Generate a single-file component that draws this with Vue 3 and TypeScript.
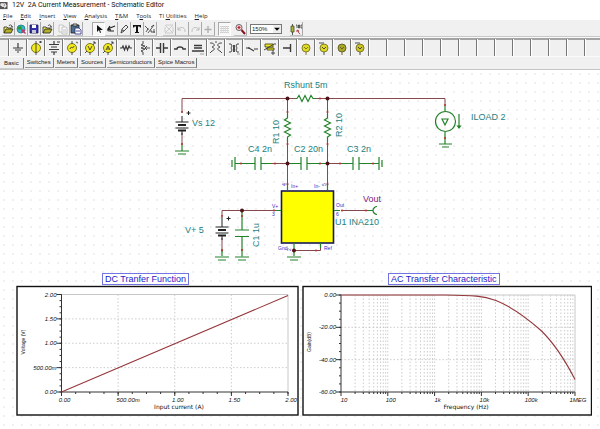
<script setup lang="ts">
import { ref } from 'vue'

interface Stroke {
  d: string
  s?: string
  f?: string
  w?: number
}
interface Tool {
  name: string
  art: Stroke[]
  disabled?: boolean
}

const menus: [string, string, string][] = [
  ['', 'F', 'ile'],
  ['', 'E', 'dit'],
  ['', 'I', 'nsert'],
  ['', 'V', 'iew'],
  ['', 'A', 'nalysis'],
  ['', 'T', '&M'],
  ['T', 'o', 'ols'],
  ['TI ', 'U', 'tilities'],
  ['', 'H', 'elp'],
]

const folder: Stroke[] = [
  { d: 'M2 10V4h3l1 1h3v2', s: '#222', f: '#f4ee60' },
  { d: 'M2 10l2-4h7l-2 4z', s: '#222', f: '#b8b028' },
  { d: 'M7 3c1-2 3-1 3 1M9 4h2', s: '#222' },
]

const fileTools: Tool[] = [
  { name: 'Open', art: folder },
  {
    name: 'Open from web',
    art: [
      { d: 'M6 2a4 4 0 1 0 0 8a4 4 0 1 0 0-8z', s: '#137a86', f: '#35b9c8' },
      { d: 'M3 4l3-1 1 2-2 2-2-1z', f: '#2b9a38' },
      { d: 'M6 6l5 1-2 1 2 2-1 1-2-2-1 1z', f: '#c23a6c' },
    ],
  },
  {
    name: 'Save',
    art: [
      { d: 'M2 2h8v8H2z', s: '#15155e', f: '#3434a8' },
      { d: 'M4 2h4v3H4z', f: '#fff' },
      { d: 'M4 7h4v3H4z', f: '#c8c8d4' },
    ],
  },
  { name: 'Close', art: folder },
]

const clipTools: Tool[] = [
  {
    name: 'Copy',
    disabled: true,
    art: [
      { d: 'M2 2h4l1 1v6H2z', s: '#bbb', f: '#f7f7f7' },
      { d: 'M5 4h4l1 1v6H5zM6 7h3M6 9h3', s: '#bbb', f: '#f7f7f7' },
    ],
  },
  {
    name: 'Paste',
    art: [
      { d: 'M1 2h8v8H1z', s: '#222', f: '#4a6f86' },
      { d: 'M3 1h4v2H3z', s: '#222', f: '#ddd' },
      { d: 'M5 5h4l2 2v4H5zM6 8h4', s: '#23238e', f: '#fff' },
    ],
  },
]

const editTools: Tool[] = [
  { name: 'Select', art: [{ d: 'M4 2v7l2-2 1 3 1-.5L7 7h3z', f: '#111' }] },
  { name: 'Last component', art: [{ d: 'M10 3L5 5c-3 1-3 3 0 3h4M5 3L3 6l3 1', s: '#222', w: 1.2 }] },
  { name: 'Wire', art: [{ d: 'M3 10l1-4 4-4 2 2-4 4zM4 7l2 1', s: '#222', f: '#eee' }] },
  { name: 'Text', art: [{ d: 'M2 2h8v2.5H9L8.500 3.500H7V9h1v1H4V9h1V3.500H3.500L3 4.500H2z', f: '#111' }] },
  { name: 'Hide values', art: [{ d: 'M1 3l3 3-2 3M3 6h2M10 2L4 10M7 4l3-2M7 7v2h4M10 6v4', s: '#333' }] },
]

const historyTools: Tool[] = [
  { name: 'Delete', disabled: true, art: [{ d: 'M2 2l8 8M10 2l-8 8M3 2h7M2 10h8M2 4v5M10 4v5', s: '#c4c4c4' }] },
  { name: 'Undo', disabled: true, art: [{ d: 'M2 4v3h3M2 7c2-4 7-3 7 1v1', s: '#b4b4b4' }] },
  { name: 'Redo', disabled: true, art: [{ d: 'M10 4v3H7M10 7c-2-4-7-3-7 1v1', s: '#b4b4b4' }] },
  { name: 'Move', disabled: true, art: [{ d: 'M6 3v7M2.500 6.500h7', s: '#b0b0b0', w: 1.4 }] },
]

const gridTool: Tool[] = [
  { name: 'Grid', art: [{ d: 'M1 3.500h9M1 5.500h9M1 7.500h9M1 9.500h9', s: '#c4c4c4' }, { d: 'M2.500 3v7M4.500 3v7M6.500 3v7M8.500 3v7', s: '#d8d8d8' }] },
]
const zoomTool: Tool[] = [
  {
    name: 'Zoom',
    art: [
      { d: 'M5 1.500a3 3 0 1 0 0 6a3 3 0 1 0 0-6z', s: '#444', f: '#f6d8d8' },
      { d: 'M3.500 4.500h3M5 3v3', s: '#c01830', w: 1.2 },
      { d: 'M7.500 7l3.500 4', s: '#8c1022', w: 2 },
    ],
  },
]
const findTool: Tool[] = [
  {
    name: 'Find component',
    art: [
      { d: 'M2.500 1v11', s: '#333' },
      { d: 'M1 3h3v6H1z', s: '#4c5222', f: '#a8b23a' },
      { d: 'M6 2h1v3M8.500 2v3h1V2zM12 2h-1v3h1', s: '#333', w: 0.8 },
      { d: 'M7 7l2 1-1 .7 2 2.500M7 7v2', s: '#b01828' },
    ],
  },
]

const disc = (r: number): string => `M8 ${8 - r}a${r} ${r} 0 1 0 0 ${2 * r}a${r} ${r} 0 1 0 0-${2 * r}z`
const yellow = '#f1e91c'
const ink = '#3a3a3a'

const parts: Tool[] = [
  { name: 'Ground', art: [{ d: 'M8 3v5M3 8h10M5 10h6M7 12h2', s: ink, w: 1.2 }] },
  { name: 'Voltage source', art: [{ d: disc(4.5), s: '#6f6a10', f: yellow }, { d: 'M8 1v14M11 2h3M12.500 1v2', s: ink }] },
  { name: 'Battery', art: [{ d: 'M8 1v3M8 12v3M3 4.500h10M5 7h6M3 9.500h10M5 12h6M11 2h3', s: ink, w: 1.2 }] },
  { name: 'Generator', art: [{ d: disc(4.5), s: '#6f6a10', f: yellow }, { d: 'M8 1v3M8 12v3M6 9c1-4 3 1 4-3M12 2l2 1', s: ink }] },
  { name: 'Voltmeter', art: [{ d: disc(4.5), s: '#6f6a10', f: yellow }, { d: 'M6 6l2 4 2-4M3 13l2-2M11 5l2-3M11 2h2v2M8 12v3', s: ink }] },
  { name: 'Ammeter', art: [{ d: disc(4.5), s: '#6f6a10', f: yellow }, { d: 'M6 10l2-4 2 4M7 9h2M3 13l2-2M11 5l2-3M11 2h2v2M8 12v3', s: ink }] },
  { name: 'Resistor', art: [{ d: 'M2 8h2l1-2 1.500 4L8 6l1.500 4L11 6l1 2h2', s: ink, w: 1.2 }] },
  { name: 'Potentiometer', art: [{ d: 'M7 1v3l-2 1 4 1-4 2 4 1-4 2 2 1v3M14 8H9M11 6L9 8l2 2', s: ink }] },
  { name: 'Capacitor', art: [{ d: 'M2 8h4M10 8h4M6.500 3v10M9.500 3v10', s: ink, w: 1.4 }] },
  { name: 'Inductor', art: [{ d: 'M2 9h3c0-2 2-2 3-2s3 0 3 2h3', s: ink, w: 1.4 }] },
  { name: 'Core inductor', art: [{ d: 'M4 5.500h8M4 8h8M2 11h12', s: ink, w: 1.4 }, { d: 'M10 14h4', s: '#999' }] },
  { name: 'Coupled inductors', art: [{ d: 'M2 3h2c3 1 3 3 0 4c3 1 3 3 0 4l-2 2M14 3h-2c-3 1-3 3 0 4c-3 1-3 3 0 4l2 2M7 2h2', s: ink }] },
  { name: 'Transformer', art: [{ d: 'M3 4h2l1 2-1 2 1 2-1 2H3M13 4h-2l-1 2 1 2-1 2 1 2h2M7.500 5v7M8.500 5v7', s: ink }, { d: 'M11 14h3', s: '#999' }] },
  { name: 'Switch', art: [{ d: 'M2 8h3l5 3M10 9h4M5 7v2', s: ink, w: 1.2 }] },
  { name: 'Relay', art: [{ d: 'M3 4h8v3H3zM5 8h7v2H5z', s: '#4b4b16', f: yellow }, { d: 'M2 10l10-6h2M11 10v5M9 13h4', s: ink }] },
  { name: 'Jumper', art: [{ d: 'M3 8h7M10.500 4v8', s: ink, w: 1.4 }] },
  { name: 'Lamp', art: [{ d: disc(4), s: '#77731c', f: '#ded82a' }, { d: 'M6 7l2 2 2-2M8 12v3', s: '#77731c' }] },
  { name: 'Voltage pin', art: [{ d: disc(4), s: '#77731c', f: '#ded82a' }, { d: 'M6 7l2 2 2-2M8 12v3M3 3h3M7 2v2', s: ink }] },
  { name: 'Current pin', art: [{ d: disc(4), s: '#5d5c24', f: '#aaa62a' }, { d: 'M6 7l2 2 2-2M8 12v3', s: '#5d5c24' }] },
  { name: 'Power pin', art: [{ d: disc(4), s: '#77731c', f: '#cac42a' }, { d: 'M6 7l2 2 2-2M8 12v3M3 3h3M7 2v2', s: ink }] },
]
const emptySlots = 60

const toolGroups: { id: string; tools: Tool[] }[] = [
  { id: 'file', tools: fileTools },
  { id: 'clip', tools: clipTools },
  { id: 'edit', tools: editTools },
  { id: 'history', tools: historyTools },
  { id: 'grid', tools: gridTool },
  { id: 'zoom', tools: zoomTool },
]

const activeTool = ref('Select')
const gridShown = ref(true)
const zoom = ref('150%')

function pick(name: string): void {
  if (name === 'Grid') gridShown.value = !gridShown.value
  else activeTool.value = name
}
function isPressed(name: string): boolean {
  return name === 'Grid' ? gridShown.value : activeTool.value === name
}

const tabs = ['Basic', 'Switches', 'Meters', 'Sources', 'Semiconductors', 'Spice Macros']
const activeTab = ref('Basic')

const wires = [
  'M182 112V98.500H295M315 98.500H445V106',
  'M287.500 98.500V114M287.500 142V184M327.500 98.500V114M327.500 142V184',
  'M182 133v12M270 163.500h24M314 163.500h34',
  'M222 216V210.500H276M341 210.500H368M222 238v14',
  'M294 250.500H320.500V245',
]
const leads = [
  'M182 145v6M175 151h14M178 154h8',
  'M295 98.500h2l2-3 3 6 3-6 3 6 3-6 2 3h2',
  'M287.500 114v4l-3 2 6 3-6 3 6 3-6 3 6 3-3 2v5',
  'M327.500 114v4l-3 2 6 3-6 3 6 3-6 3 6 3-3 2v5',
  'M232 160v7M235 157v13M235 163.500h20M255 157v13M261 157v13M261 163.500h10',
  'M287.500 163.500h13M301 157v13M307 157v13M307 163.500h20',
  'M340 163.500h13M353 157v13M359 157v13M359 163.500h20M379 157v13M382 160v7',
  'M445 106v5M445 132v12M439 144h13M442 147h7M459 114v14M457.500 126l1.500 2 1.500-2z',
  'M442 119h6l-3 6z',
  'M287.500 184v6M327.500 184v6M276 210.500h5M334 210.500h6M294 243v13M320.500 243v5',
  'M242 210.500v19M235 230h14M235 236.500h14M242 236.500v20',
  'M222 250v6M215 257h14M218 260h8M235 257h14M238 260h8M287 257h14M290 260h8',
  'M368 210.500h5M377 206.500c-2 0-4 2-4 4s2 4 4 4',
]
const nodes: [number, number][] = [
  [287.5, 98.5], [327.5, 98.5], [287.5, 163.5], [327.5, 163.5], [242, 210.5], [294, 250.5],
]
const pins: [number, number][] = [
  [182, 112], [182, 144], [320, 98.5], [287.5, 112], [287.5, 144], [327.5, 112], [327.5, 144],
  [241, 163.5], [275, 163.5], [320, 163.5], [340, 163.5], [373, 163.5], [445, 105], [445, 138],
  [287.5, 184], [327.5, 184], [274, 210.5], [342, 210.5], [366, 210.5], [222, 216], [242, 216],
  [222, 250], [242, 250], [316, 250.5],
]
const labels: { t: string; x: number; y: number; up?: boolean }[] = [
  { t: 'Rshunt 5m', x: 284, y: 88 },
  { t: 'Vs 12', x: 192, y: 126 },
  { t: 'ILOAD 2', x: 471, y: 120 },
  { t: 'R1 10', x: 279, y: 144, up: true },
  { t: 'R2 10', x: 342, y: 137, up: true },
  { t: 'C4 2n', x: 248, y: 152 },
  { t: 'C2 20n', x: 294, y: 152 },
  { t: 'C3 2n', x: 347, y: 152 },
  { t: 'V+ 5', x: 185, y: 233 },
  { t: 'C1 1u', x: 259, y: 247, up: true },
  { t: 'U1 INA210', x: 335, y: 225 },
]
const pinLabels: { t: string; x: number; y: number }[] = [
  { t: 'In+', x: 291, y: 188 },
  { t: 'In-', x: 314, y: 188 },
  { t: 'V+', x: 272, y: 208 },
  { t: '3', x: 272, y: 216 },
  { t: 'Out', x: 336, y: 207 },
  { t: '6', x: 336, y: 216 },
  { t: 'Gnd', x: 278, y: 250 },
  { t: 'Ref', x: 324, y: 250 },
]

interface Tick {
  at: number
  label: string
}
interface Chart {
  id: string
  title: string
  box: string
  frame: { x: number; w: number }
  plot: { x: number; w: number; y: number; h: number }
  xs: Tick[]
  ys: Tick[]
  minorX: number[]
  gridX: number[]
  minorY: number[]
  curve: string
  xTitle: string
  xTitleAt: number
  yTitle: string
  yTitleAt: number
}

const spread = (from: number, to: number, n: number): number[] =>
  Array.from({ length: n + 1 }, (_, i) => from + ((to - from) * i) / n)

const dcX = ['0.00', '500.00m', '1.00', '1.50', '2.00']
const dcY = ['2.00', '1.50', '1.00', '500.00m', '0.00']
const acX = ['10', '100', '1k', '10k', '100k', '1MEG']
const acY = ['0.00', '-20.00', '-40.00', '-60.00']
const dcXs = spread(61.5, 288, 4)
const dcYs = spread(294.5, 392, 4)
const acXs = spread(341, 575, 5)
const acYs = spread(295, 392, 3)
const logSteps = acXs
  .slice(0, 5)
  .flatMap((x) => [2, 3, 4, 5, 6, 7, 8, 9].map((m) => x + 46.8 * Math.log10(m)))

const charts: Chart[] = [
  {
    id: 'dc',
    title: 'DC Tranfer Function',
    box: '16 285 283 131',
    frame: { x: 17, w: 281 },
    plot: { x: 61.5, w: 226.5, y: 294.5, h: 97.5 },
    xs: dcX.map((label, i) => ({ label, at: dcXs[i] })),
    ys: dcY.map((label, i) => ({ label, at: dcYs[i] })),
    minorX: spread(61.5, 288, 16),
    gridX: dcXs.slice(1, 4),
    minorY: spread(294.5, 392, 16),
    curve: 'M61.500 392L288 295.500',
    xTitle: 'Input current (A)',
    xTitleAt: 179,
    yTitle: 'Voltage (V)',
    yTitleAt: 25,
  },
  {
    id: 'ac',
    title: 'AC Transfer Characteristic',
    box: '302 285 290 131',
    frame: { x: 303, w: 288.5 },
    plot: { x: 341, w: 234, y: 295, h: 97 },
    xs: acX.map((label, i) => ({ label, at: acXs[i] })),
    ys: acY.map((label, i) => ({ label, at: acYs[i] })),
    minorX: logSteps,
    gridX: [...logSteps, ...acXs.slice(1, 5)],
    minorY: spread(295, 392, 12),
    curve: 'M341 295H445C474 295.200 483 296 496 300.500C512 307 528 319 541 330.500C555 344 566 362 575 379.500',
    xTitle: 'Frequency (Hz)',
    xTitleAt: 466,
    yTitle: 'Gain(dB)',
    yTitleAt: 311,
  },
]
</script>

<template>
  <div class="editor">
    <header class="title">
      <svg class="logo" viewBox="0 0 9 9" aria-hidden="true">
        <path d="M0 0h8.500v8H0z" fill="#555" />
        <path d="M1 2h3v2H1zM2 5h5M5 1l2 3-2 3" fill="#ddd" stroke="#eee" />
      </svg>
      <h1>12V&nbsp; 2A Current Measurement - Schematic Editor</h1>
    </header>

    <nav class="menu" aria-label="Main menu">
      <button v-for="m in menus" :key="m.join('')" type="button">{{ m[0] }}<u>{{ m[1] }}</u>{{ m[2] }}</button>
    </nav>

    <div class="toolbar" role="toolbar" aria-label="Tools">
      <div v-for="g in toolGroups" :key="g.id" class="group" :class="g.id">
        <button
          v-for="t in g.tools"
          :key="t.name"
          type="button"
          class="tool"
          :class="{ pressed: isPressed(t.name) }"
          :aria-label="t.name"
          :disabled="t.disabled"
          @click="pick(t.name)"
        >
          <svg viewBox="0 0 12 12">
            <path v-for="(a, i) in t.art" :key="i" :d="a.d" :stroke="a.s ?? 'none'" :fill="a.f ?? 'none'" :stroke-width="a.w ?? 0.8" />
          </svg>
        </button>
      </div>
      <div class="combo">
        <select v-model="zoom" aria-label="Zoom level">
          <option>100%</option>
          <option>150%</option>
          <option>200%</option>
        </select>
        <svg class="arrow" viewBox="0 0 7 7" aria-hidden="true"><path d="M1 2.500h5L3.500 5z" /></svg>
      </div>
      <button v-for="t in findTool" :key="t.name" type="button" class="tool" :aria-label="t.name">
        <svg viewBox="0 0 12 12">
          <path v-for="(a, i) in t.art" :key="i" :d="a.d" :stroke="a.s ?? 'none'" :fill="a.f ?? 'none'" :stroke-width="a.w ?? 0.8" />
        </svg>
      </button>
    </div>

    <div class="parts" role="toolbar" aria-label="Components">
      <button v-for="p in parts" :key="p.name" type="button" class="part" :aria-label="p.name">
        <svg viewBox="0 0 16 16">
          <path v-for="(a, i) in p.art" :key="i" :d="a.d" :stroke="a.s ?? 'none'" :fill="a.f ?? 'none'" :stroke-width="a.w ?? 0.9" />
        </svg>
      </button>
      <span v-for="n in emptySlots" :key="n" class="part"></span>
    </div>

    <div class="tabs" role="tablist">
      <button
        v-for="t in tabs"
        :key="t"
        type="button"
        role="tab"
        class="tab"
        :class="{ active: t === activeTab }"
        :aria-selected="t === activeTab"
        @click="activeTab = t"
      >{{ t }}</button>
    </div>

    <main class="sheet" :class="{ dotted: gridShown }">
      <svg class="schematic" viewBox="0 70 600 203" role="img" aria-label="Current measurement schematic">
        <path v-for="w in wires" :key="w" :d="w" class="wire" />
        <rect x="281.5" y="191" width="52" height="52" class="chip" />
        <path v-for="l in leads" :key="l" :d="l" class="lead" />
        <circle cx="445.500" cy="121.500" r="10" class="lead" />
        <path d="M182 116v6M175.500 122h13M175.500 128h13M222 217v10M215.500 227h13M215.500 233h13M182 131v4M222 236v4M188.500 111v4M186.500 113h4M228.500 216.500v4M226.500 218.500h4" class="cell" />
        <path d="M178 125h8M178 130.500h8M218 230h8M218 235.500h8" class="cell thick" />
        <circle v-for="(p, i) in pins" :key="'p' + i" :cx="p[0]" :cy="p[1]" r="1.100" class="pin" />
        <circle v-for="(n, i) in nodes" :key="'n' + i" :cx="n[0]" :cy="n[1]" r="2" class="node" />
        <text
          v-for="l in labels"
          :key="l.t"
          class="label"
          :transform="`translate(${l.x} ${l.y})${l.up ? ' rotate(-90)' : ''}`"
        >{{ l.t }}</text>
        <text x="363" y="202" class="label out">Vout</text>
        <text v-for="l in pinLabels" :key="l.t" :x="l.x" :y="l.y" class="pin-label">{{ l.t }}</text>
        <text transform="translate(286 186) rotate(-90)" class="pin-label">4</text>
        <text transform="translate(326 186) rotate(-90)" class="pin-label">5</text>
        <text transform="translate(291 251) rotate(-90)" class="pin-label">2</text>
      </svg>

      <section class="charts">
        <figure v-for="c in charts" :key="c.id">
          <figcaption>{{ c.title }}</figcaption>
          <svg :viewBox="c.box" role="img" :aria-label="c.title">
            <rect :x="c.frame.x" y="286.500" :width="c.frame.w" height="128.500" class="frame" />
            <path
              v-for="x in c.gridX"
              :key="'gx' + x"
              :d="`M${x} ${c.plot.y}v${c.plot.h}`"
              class="grid-line"
            />
            <path
              v-for="y in c.ys.slice(1, -1)"
              :key="'gy' + y.at"
              :d="`M${c.plot.x} ${y.at}h${c.plot.w}`"
              class="grid-line"
            />
            <path :d="`M${c.plot.x} ${c.plot.y}h${c.plot.w}v${c.plot.h}`" class="edge" />
            <path :d="`M${c.plot.x} ${c.plot.y}v${c.plot.h}h${c.plot.w}`" class="axis" />
            <path v-for="x in c.minorX" :key="'mx' + x" :d="`M${x} 392v2`" class="axis" />
            <path v-for="y in c.minorY" :key="'my' + y" :d="`M${c.plot.x} ${y}h-2`" class="axis" />
            <template v-for="x in c.xs" :key="x.label">
              <path :d="`M${x.at} 392v4`" class="axis" />
              <text :x="x.at + (x.label.length > 5 ? 10 : 3)" y="402" class="tick mid">{{ x.label }}</text>
            </template>
            <template v-for="y in c.ys" :key="y.label">
              <path :d="`M${c.plot.x} ${y.at}h-5`" class="axis" />
              <text :x="c.plot.x - 5" :y="y.at + 2" class="tick end">{{ y.label }}</text>
            </template>
            <path :d="c.curve" class="curve" />
            <text :x="c.xTitleAt" y="409" class="axis-title mid">{{ c.xTitle }}</text>
            <text :transform="`translate(${c.yTitleAt} 342) rotate(-90)`" class="side-title mid">{{ c.yTitle }}</text>
          </svg>
        </figure>
      </section>
    </main>
  </div>
</template>

<style>
body {
  margin: 0;
  background: #fff;
}
</style>

<style scoped>
.editor {
  display: flex;
  flex-direction: column;
  min-height: 100vh;
  overflow: hidden;
  font-family: "Liberation Sans", Arial, sans-serif;
  font-size: 6px;
  color: #222;
}
button {
  margin: 0;
  padding: 0;
  border: 0;
  background: none;
  font: inherit;
  color: inherit;
}
.title {
  display: flex;
  align-items: center;
  gap: 4px;
  height: 11px;
}
.logo {
  width: 8px;
  height: 8px;
}
h1 {
  margin: 0;
  font: 400 7px/9px Roboto, "Noto Sans", sans-serif;
  color: #111;
  white-space: nowrap;
}
.menu {
  display: flex;
  align-items: center;
  gap: 8px;
  height: 9px;
  padding-left: 3px;
  font: 6px/8px "Open Sans", "Noto Sans", sans-serif;
}
.menu button {
  white-space: nowrap;
}
.toolbar {
  display: flex;
  align-items: center;
  height: 16px;
  padding: 2px 0 0 2px;
  box-sizing: border-box;
  background: #f0f0f0;
}
.group {
  display: flex;
  margin-right: 3px;
}
.group.clip {
  margin-right: 9px;
}
.group.edit {
  margin-right: 6px;
}
.tool {
  display: flex;
  align-items: center;
  justify-content: center;
  width: 13px;
  height: 14px;
  box-sizing: border-box;
  border-right: 1px solid #a9a9a9;
  border-bottom: 1px solid #c4c4c4;
}
.tool.pressed {
  border: 1px solid #a9a9a9;
  border-right-color: #fff;
  border-bottom-color: #fff;
  background: #f8f8f8;
}
.tool svg {
  flex: none;
  width: 12px;
  height: 12px;
}
.combo {
  display: grid;
  width: 32px;
  height: 10px;
  margin-right: 8px;
  border: 1px solid #777;
  box-sizing: border-box;
  background: #fff;
}
.combo select,
.arrow {
  grid-area: 1 / 1;
}
.combo select {
  appearance: none;
  width: 100%;
  padding: 0 0 0 1px;
  border: 0;
  background: none;
  font: 6px/8px "Liberation Sans", Arial, sans-serif;
  color: #222;
}
.arrow {
  justify-self: end;
  width: 8px;
  height: 8px;
  background: #eee;
  pointer-events: none;
}
.parts {
  display: flex;
  height: 20px;
  box-sizing: border-box;
  padding-left: 8px;
  overflow: hidden;
  border-top: 1px solid #c8c8c8;
  background: linear-gradient(#f8f8f8 0 1px, #a4a4a4 1px 3px, #f0f0f0 3px);
}
.part {
  flex: none;
  display: flex;
  align-items: center;
  justify-content: center;
  width: 18px;
  height: 17px;
  margin-top: 2px;
  box-sizing: border-box;
  border-left: 1px solid #777;
  box-shadow: inset 1px 0 #fff;
}
.part svg {
  width: 16px;
  height: 16px;
}
.tabs {
  display: flex;
  align-items: flex-start;
  gap: 1px;
  height: 14px;
  box-sizing: border-box;
  padding-top: 1px;
  border-top: 1px solid #fafafa;
  border-bottom: 1px solid #c4c4c4;
  background: #f0f0f0;
}
.tab {
  height: 10px;
  padding: 0 2px;
  border-right: 1px solid #777;
  border-bottom: 1px solid #999;
  line-height: 9px;
  white-space: nowrap;
}
.tab.active {
  height: 11px;
  padding: 0 4px;
  border-bottom-color: #ccc;
  line-height: 11px;
}
.sheet {
  flex: 1;
}
.sheet.dotted {
  background: radial-gradient(circle at 4px 4px, #f0f0f0 0 1px, transparent 1px) 0 0 / 9px 9px;
}
.schematic {
  display: block;
  width: 100%;
}
.wire {
  fill: none;
  stroke: #85484c;
}
.lead {
  fill: none;
  stroke: #22822a;
  stroke-width: 1.2;
}
.cell {
  fill: none;
  stroke: #222;
}
.cell.thick {
  stroke-width: 2;
}
.chip {
  fill: #ff0;
  stroke: #191958;
  stroke-width: 1.6;
}
.pin {
  fill: #b8342c;
}
.node {
  fill: #4e1218;
}
.label {
  font-size: 9px;
  fill: #23807e;
}
.label.out {
  fill: #82207e;
}
.pin-label {
  font-size: 5px;
  fill: #2c2cc4;
}
.charts {
  display: grid;
  grid-template-columns: 283fr 290fr;
  gap: 3px;
  padding: 0 8px 0 16px;
}
figure {
  display: flex;
  flex-direction: column;
  align-items: flex-start;
  margin: 0;
}
figcaption {
  margin-left: 86px;
  padding: 0 2px;
  border: 1px solid #7474e4;
  background: #fff;
  font-size: 9px;
  line-height: 10px;
  color: #2222c8;
  white-space: nowrap;
}
figure svg {
  display: block;
  width: 100%;
}
.frame {
  fill: #fff;
  stroke: #111;
  stroke-width: 1.4;
}
.grid-line {
  stroke: #c0c0c0;
  stroke-dasharray: 1.5 2;
  stroke-width: 0.8;
}
.edge {
  fill: none;
  stroke: #c8c8c8;
}
.axis {
  fill: none;
  stroke: #333;
}
.curve {
  fill: none;
  stroke: #94383c;
  stroke-width: 1.1;
}
.tick {
  font-size: 6px;
  font-style: italic;
  fill: #111;
}
.axis-title {
  font: 6px "DejaVu Sans", Verdana, sans-serif;
  fill: #111;
}
.side-title {
  font-size: 5px;
  fill: #111;
}
.mid {
  text-anchor: middle;
}
.end {
  text-anchor: end;
}
</style>
